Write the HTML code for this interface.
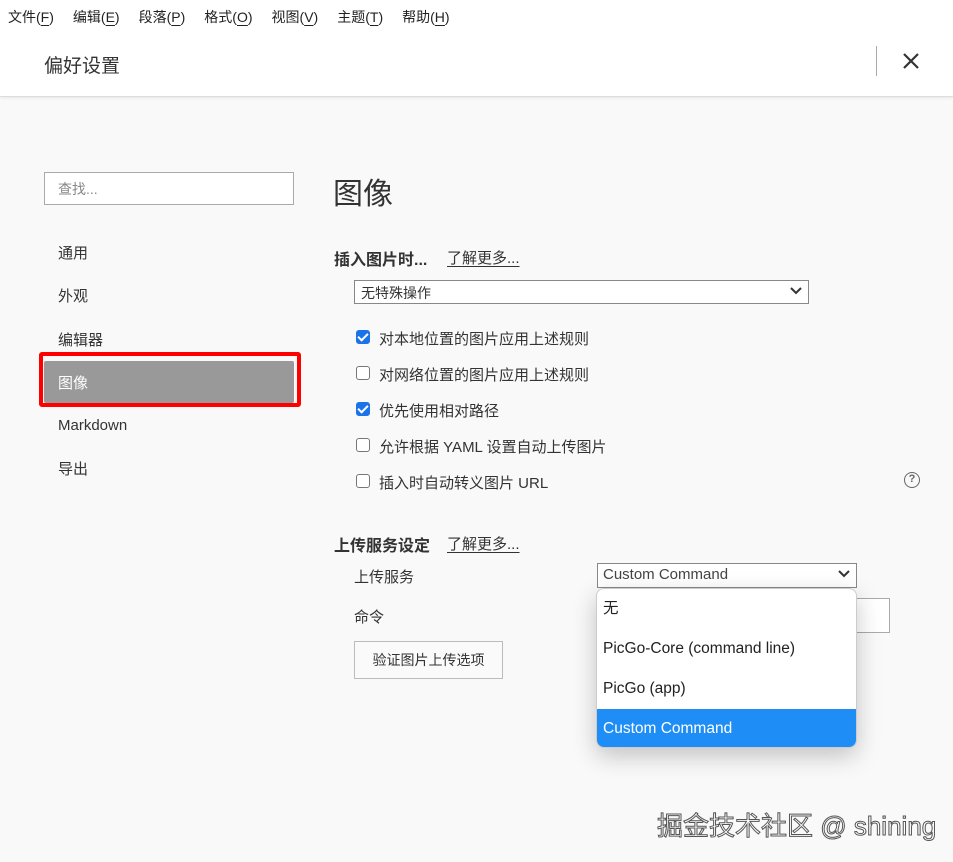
<!DOCTYPE html>
<html><head><meta charset="utf-8"><style>
*{box-sizing:border-box;margin:0;padding:0}
body{width:953px;height:862px;overflow:hidden;background:#f9f9f9;font-family:"Liberation Sans","Noto Sans CJK SC",sans-serif;color:#333;position:relative}
.a{position:absolute;white-space:nowrap}
.hdr{position:absolute;left:0;top:0;width:953px;height:97px;background:#fff;border-bottom:1px solid #ddd;box-shadow:0 1px 3px rgba(0,0,0,.08)}
.menu span{margin-right:19px}
.nav{font-size:15px;color:#333;left:58px}
.cb{position:absolute;left:356px;width:14px;height:14px;border:1.5px solid #777;border-radius:3px;background:#fff}
.cb.on{background:#1a73e8;border-color:#1a73e8}
.cb.on:after{content:"";position:absolute;left:3px;top:0px;width:4px;height:8px;border:solid #fff;border-width:0 2px 2px 0;transform:rotate(45deg)}
.lbl{left:379px;font-size:15px;color:#333}
.sel{position:absolute;background:#fff;border:1px solid #888;font-size:14px;color:#333}
.chev{position:absolute;right:6px;top:5px}
u{text-underline-offset:3px}
</style></head><body>
<div class="hdr"></div>
<div class="a menu" style="left:8px;top:7px;font-size:14px;color:#222"><span>文件(<u>F</u>)</span><span>编辑(<u>E</u>)</span><span>段落(<u>P</u>)</span><span>格式(<u>O</u>)</span><span>视图(<u>V</u>)</span><span>主题(<u>T</u>)</span><span>帮助(<u>H</u>)</span></div>
<div class="a" style="left:44px;top:51px;font-size:19px;color:#333">偏好设置</div>
<div class="a" style="left:876px;top:46px;width:1px;height:30px;background:#aaa"></div>
<svg class="a" style="left:902px;top:52px" width="18" height="18"><path d="M2 2L16 16M16 2L2 16" stroke="#333" stroke-width="2.2"/></svg>

<div class="a" style="left:44px;top:172px;width:250px;height:33px;border:1px solid #aaa;background:#fff;font-size:14px;color:#888;padding:6px 13px">查找...</div>
<div class="a nav" style="top:242px">通用</div>
<div class="a nav" style="top:285px">外观</div>
<div class="a nav" style="top:329px">编辑器</div>
<div class="a" style="left:39px;top:352px;width:262px;height:55px;border:4px solid #f00;border-radius:3px"></div>
<div class="a" style="left:44px;top:361px;width:250px;height:42px;background:#999;border-radius:2px"></div>
<div class="a nav" style="top:372px;color:#fff">图像</div>
<div class="a nav" style="top:417px">Markdown</div>
<div class="a nav" style="top:458px">导出</div>

<div class="a" style="left:333px;top:169px;font-size:30px;color:#333">图像</div>
<div class="a" style="left:334px;top:246px;font-size:16px;font-weight:bold;color:#333">插入图片时...</div>
<div class="a" style="left:447px;top:247px;font-size:15px;color:#333"><u>了解更多...</u></div>
<div class="sel" style="left:354px;top:280px;width:455px;height:24px;padding:2px 6px">无特殊操作<svg class="chev" width="12" height="10"><path d="M1 2L6 7L11 2" stroke="#333" stroke-width="2" fill="none"/></svg></div>
<div class="cb on" style="top:330px"></div><div class="a lbl" style="top:328px">对本地位置的图片应用上述规则</div>
<div class="cb" style="top:366px"></div><div class="a lbl" style="top:364px">对网络位置的图片应用上述规则</div>
<div class="cb on" style="top:402px"></div><div class="a lbl" style="top:400px">优先使用相对路径</div>
<div class="cb" style="top:438px"></div><div class="a lbl" style="top:436px">允许根据 YAML 设置自动上传图片</div>
<div class="cb" style="top:474px"></div><div class="a lbl" style="top:472px">插入时自动转义图片 URL</div>
<div class="a" style="left:904px;top:472px;width:16px;height:16px;border:1.5px solid #666;border-radius:50%;font-size:11px;font-weight:bold;color:#666;text-align:center;line-height:13px">?</div>

<div class="a" style="left:334px;top:532px;font-size:16px;font-weight:bold;color:#333">上传服务设定</div>
<div class="a" style="left:447px;top:533px;font-size:15px;color:#333"><u>了解更多...</u></div>
<div class="a" style="left:354px;top:566px;font-size:15px">上传服务</div>
<div class="a" style="left:354px;top:606px;font-size:15px">命令</div>
<div class="a" style="left:840px;top:598px;width:50px;height:35px;background:#fff;border:1px solid #aaa"></div>
<div class="a" style="left:354px;top:641px;width:149px;height:38px;border:1px solid #bbb;background:#fafafa;font-size:14px;text-align:center;line-height:36px">验证图片上传选项</div>
<div class="sel" style="left:597px;top:563px;width:260px;height:25px;padding:2px 5px;color:#444;font-size:15px">Custom Command<svg class="chev" width="12" height="10"><path d="M1 2L6 7L11 2" stroke="#333" stroke-width="2" fill="none"/></svg></div>
<div class="a" style="left:596px;top:588px;width:261px;height:160px;background:#fff;border:1px solid #ccc;border-radius:8px;box-shadow:0 8px 24px rgba(0,0,0,.22);overflow:hidden;font-size:15.5px;color:#222">
<div style="height:40px;line-height:40px;padding-left:6px">无</div>
<div style="height:40px;line-height:40px;padding-left:6px">PicGo-Core (command line)</div>
<div style="height:40px;line-height:40px;padding-left:6px">PicGo (app)</div>
<div style="height:40px;line-height:40px;padding-left:6px;background:#1e8ef6;color:#fff">Custom Command</div>
</div>
<div class="a" style="left:657px;top:806px;font-size:26px;color:#fff;-webkit-text-stroke:1px #555;letter-spacing:0px">掘金技术社区 @ shining</div>
</body></html>
